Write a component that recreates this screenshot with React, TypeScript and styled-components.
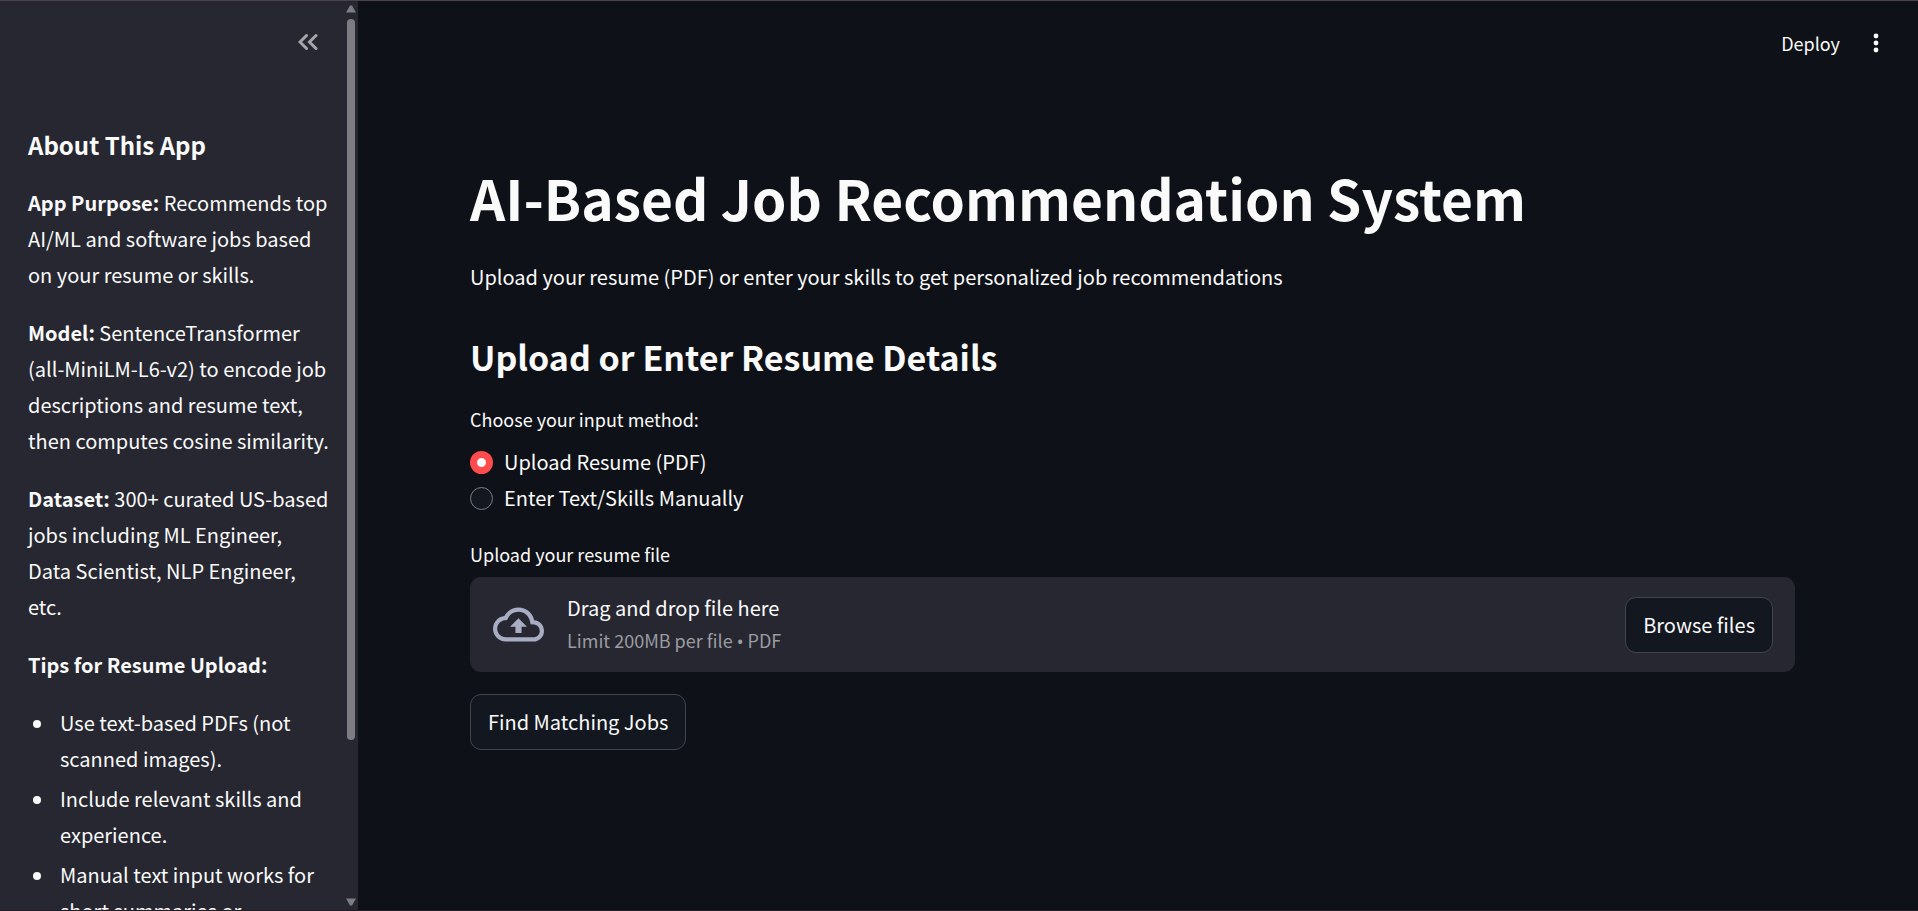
import React from "react";
import styled, { createGlobalStyle } from "styled-components";
import { MdOutlineCloudUpload } from "react-icons/md";

const GlobalStyle = createGlobalStyle`
  *, *::before, *::after { box-sizing: border-box; }
  html, body, #root { height: 100%; }
  body {
    margin: 0;
    overflow: hidden;
    background: #0e1117;
    color: #fafafa;
    font-family: "Source Sans Pro", "Noto Sans CJK SC", sans-serif;
    font-size: 20px;
    line-height: 36px;
  }
  h1, h2, h3, p, ul, fieldset { margin: 0; padding: 0; }
  button { font: inherit; color: inherit; cursor: pointer; }
`;

const Page = styled.div`
  display: flex;
  height: 100%;
  border-top: 1px solid #4b434b;
  border-bottom: 1px solid #231d25;
`;

const Sidebar = styled.aside`
  display: flex;
  flex: none;
  width: 358px;
  background: #262730;
`;

const SidebarBody = styled.div`
  flex: 1;
  min-width: 0;
  overflow: hidden;
`;

const SidebarHeader = styled.div`
  display: flex;
  justify-content: flex-end;
  align-items: center;
  height: 82px;
  padding: 0 22px 0 28px;
`;

const IconButton = styled.button`
  display: flex;
  align-items: center;
  justify-content: center;
  width: 28px;
  height: 28px;
  padding: 0;
  border: 0;
  background: none;
`;

const SidebarContent = styled.div`
  display: flex;
  flex-direction: column;
  gap: 22px;
  padding: 44px 15px 44px 28px;
`;

const SidebarTitle = styled.h3`
  font-size: 24px;
  font-weight: 600;
  line-height: 36px;
`;

const Tips = styled.ul`
  padding-left: 27px;
  li { padding-left: 5px; }
  li + li { margin-top: 4px; }
`;

const Scrollbar = styled.div`
  display: flex;
  flex-direction: column;
  align-items: center;
  gap: 6px;
  width: 14px;
  padding: 4px 0;
`;

const Thumb = styled.div`
  width: 8px;
  height: 80%;
  margin-bottom: auto;
  border-radius: 4px;
  background: #7d7c82;
`;

const Main = styled.main`
  flex: 1;
  min-width: 0;
`;

const Toolbar = styled.header`
  display: flex;
  justify-content: flex-end;
  align-items: center;
  gap: 22px;
  height: 84px;
  padding: 0 28px;
`;

const DeployButton = styled.button`
  padding: 0;
  border: 0;
  background: none;
  font-size: 18px;
  line-height: 28px;
`;

const Content = styled.div`
  display: flex;
  flex-direction: column;
  align-items: flex-start;
  padding: 72px 123px 112px 112px;
`;

const Title = styled.h1`
  font-size: 55px;
  font-weight: 700;
  line-height: 80px;
`;

const Intro = styled.p`
  margin-top: 22px;
`;

const SectionTitle = styled.h2`
  margin-top: 35px;
  font-size: 34px;
  font-weight: 600;
  line-height: 54px;
`;

const Options = styled.fieldset`
  margin-top: 19px;
  border: 0;
  legend { padding: 0 0 9px; }
`;

const FieldLabel = styled.span`
  display: block;
  font-size: 18px;
  line-height: 32px;
`;

const Option = styled.label`
  display: flex;
  align-items: center;
  gap: 11px;
  cursor: pointer;
`;

const Radio = styled.input`
  appearance: none;
  flex: none;
  width: 23px;
  height: 23px;
  margin: 0;
  border: 1px solid #7b7e84;
  border-radius: 50%;
  background: #13171f;
  &:checked {
    border: 7px solid #ff4b4b;
    background: #fafafa;
  }
`;

const Uploader = styled.section`
  width: 100%;
  margin-top: 22px;
`;

const Dropzone = styled.div`
  display: flex;
  align-items: center;
  gap: 23px;
  margin-top: 7px;
  padding: 15px 22px 15px 23px;
  border-radius: 11px;
  background: #262730;
`;

const DropText = styled.div`
  flex: 1;
`;

const DropHint = styled.small`
  display: block;
  color: #9b9ca1;
  font-size: 18px;
  line-height: 32px;
`;

const Bullet = styled.span`
  font-family: "Noto Sans", sans-serif;
`;

const DropTitle = styled.span`
  display: block;
  line-height: 32px;
`;

const Button = styled.button`
  height: 56px;
  padding: 0 17px;
  border: 1px solid #41444c;
  border-radius: 11px;
  background: #131720;
`;

const SubmitRow = styled.div`
  margin-top: 22px;
`;

const CollapseIcon = () => (
  <svg width="20" height="18" viewBox="0 0 20 18" fill="none" stroke="#a6a6aa" strokeWidth="3" strokeLinecap="round" aria-hidden="true">
    <path d="M8.5 2.5 2 9l6.5 6.5M18 2.5 11.5 9l6.5 6.5" />
  </svg>
);

const DotsIcon = () => (
  <svg width="28" height="28" viewBox="0 0 28 28" fill="#fafafa" aria-hidden="true">
    <circle cx="14" cy="7" r="2.4" />
    <circle cx="14" cy="14" r="2.4" />
    <circle cx="14" cy="21" r="2.4" />
  </svg>
);

const Arrow = ({ down = false }: { down?: boolean }) => (
  <svg width="10" height="8" viewBox="0 0 10 8" fill="#7d7c82" aria-hidden="true">
    <path d={down ? "M0 0.5h10L6 7.5H4z" : "M0 7.5h10L6 0.5H4z"} />
  </svg>
);

export default function App() {
  const [method, setMethod] = React.useState("pdf");
  return (
    <>
      <GlobalStyle />
      <Page>
        <Sidebar>
          <SidebarBody>
            <SidebarHeader>
              <IconButton aria-label="Collapse sidebar"><CollapseIcon /></IconButton>
            </SidebarHeader>
            <SidebarContent>
              <SidebarTitle>About This App</SidebarTitle>
              <p><strong>App Purpose:</strong> Recommends top AI/ML and software jobs based on your resume or skills.</p>
              <p><strong>Model:</strong> SentenceTransformer (all-MiniLM-L6-v2) to encode job descriptions and resume text, then computes cosine similarity.</p>
              <p><strong>Dataset:</strong> 300+ curated US-based jobs including ML Engineer, Data Scientist, NLP Engineer, etc.</p>
              <p><strong>Tips for Resume Upload:</strong></p>
              <Tips>
                <li>Use text-based PDFs (not scanned images).</li>
                <li>Include relevant skills and experience.</li>
                <li>Manual text input works for short summaries or</li>
              </Tips>
            </SidebarContent>
          </SidebarBody>
          <Scrollbar>
            <Arrow />
            <Thumb />
            <Arrow down />
          </Scrollbar>
        </Sidebar>
        <Main>
          <Toolbar>
            <DeployButton>Deploy</DeployButton>
            <IconButton aria-label="Main menu"><DotsIcon /></IconButton>
          </Toolbar>
          <Content>
            <Title>AI-Based Job Recommendation System</Title>
            <Intro>Upload your resume (PDF) or enter your skills to get personalized job recommendations</Intro>
            <SectionTitle>Upload or Enter Resume Details</SectionTitle>
            <Options>
              <legend><FieldLabel>Choose your input method:</FieldLabel></legend>
              <Option>
                <Radio type="radio" name="method" checked={method === "pdf"} onChange={() => setMethod("pdf")} />
                Upload Resume (PDF)
              </Option>
              <Option>
                <Radio type="radio" name="method" checked={method === "text"} onChange={() => setMethod("text")} />
                Enter Text/Skills Manually
              </Option>
            </Options>
            <Uploader aria-labelledby="upload-label">
              <FieldLabel id="upload-label">Upload your resume file</FieldLabel>
              <Dropzone>
                <MdOutlineCloudUpload size={51} color="#a8adc4" aria-hidden="true" />
                <DropText>
                  <DropTitle>Drag and drop file here</DropTitle>
                  <DropHint>Limit 200MB per file <Bullet>•</Bullet> PDF</DropHint>
                </DropText>
                <Button type="button">Browse files</Button>
              </Dropzone>
            </Uploader>
            <SubmitRow><Button type="button">Find Matching Jobs</Button></SubmitRow>
          </Content>
        </Main>
      </Page>
    </>
  );
}
